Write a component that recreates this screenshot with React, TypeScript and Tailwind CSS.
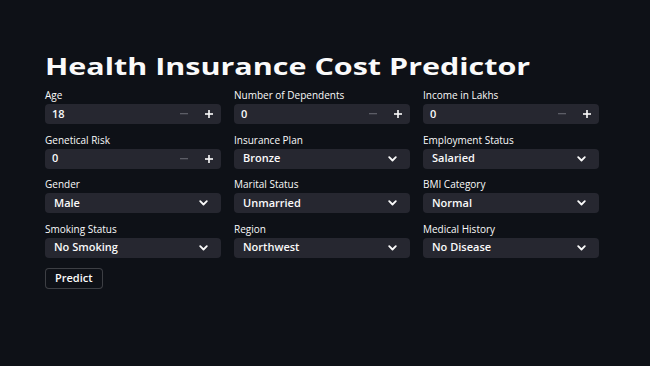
import React from "react";

const Chevron = () => (
  <svg width="9" height="6" viewBox="0 0 9 6" fill="none">
    <path d="M1.2 1.2 L4.5 4.5 L7.8 1.2" stroke="#fafafa" strokeWidth="1.8" strokeLinecap="round" strokeLinejoin="round" />
  </svg>
);

const NumberField = ({ label, value }: { label: string; value: string }) => (
  <div className="flex flex-col">
    <div className="h-[16px] text-[10px] leading-[14px] font-medium text-[#fafafa]">{label}</div>
    <div className="h-[20px] rounded-[4px] bg-[#262730] flex items-center">
      <div className="flex-1 pl-[7px] text-[11px] font-semibold text-[#fafafa]">{value}</div>
      <div className="w-[25px] h-full flex items-center justify-center">
        <svg width="8" height="2" viewBox="0 0 8 2"><rect x="0" y="0" width="8" height="1.3" fill="#5c5d66" /></svg>
      </div>
      <div className="w-[25px] h-full flex items-center justify-center">
        <svg width="8" height="8" viewBox="0 0 8 8"><rect x="0" y="3.2" width="8" height="1.6" fill="#fafafa" /><rect x="3.2" y="0" width="1.6" height="8" fill="#fafafa" /></svg>
      </div>
    </div>
  </div>
);

const SelectField = ({ label, value }: { label: string; value: string }) => (
  <div className="flex flex-col">
    <div className="h-[16px] text-[10px] leading-[14px] font-medium text-[#fafafa]">{label}</div>
    <div className="h-[20px] rounded-[4px] bg-[#262730] flex items-center pl-[9px] pr-[13px]">
      <div className="flex-1 text-[11px] font-semibold text-[#fafafa]">{value}</div>
      <Chevron />
    </div>
  </div>
);

export default function App() {
  return (
    <div className="w-[650px] h-[366px] bg-[#0e1117] overflow-hidden" style={{ fontFamily: '"Open Sans", sans-serif' }}>
      <div className="w-[554px] ml-[45px] pt-[50px]">
        <h1 className="h-[32px] mb-[6px] text-[24px] leading-[32px] font-bold text-[#fafafa] whitespace-nowrap">
          <span className="inline-block origin-left scale-x-[1.27]">Health Insurance Cost Predictor</span>
        </h1>
        <div className="grid grid-cols-3 gap-x-[13px] gap-y-[8.5px]">
          <NumberField label="Age" value="18" />
          <NumberField label="Number of Dependents" value="0" />
          <NumberField label="Income in Lakhs" value="0" />
          <NumberField label="Genetical Risk" value="0" />
          <SelectField label="Insurance Plan" value="Bronze" />
          <SelectField label="Employment Status" value="Salaried" />
          <SelectField label="Gender" value="Male" />
          <SelectField label="Marital Status" value="Unmarried" />
          <SelectField label="BMI Category" value="Normal" />
          <SelectField label="Smoking Status" value="No Smoking" />
          <SelectField label="Region" value="Northwest" />
          <SelectField label="Medical History" value="No Disease" />
        </div>
        <button className="mt-[10px] h-[21px] px-[9px] rounded-[4px] border border-[#fafafa33] bg-[#0e1117] text-[11px] font-semibold text-[#fafafa]">Predict</button>
      </div>
    </div>
  );
}
